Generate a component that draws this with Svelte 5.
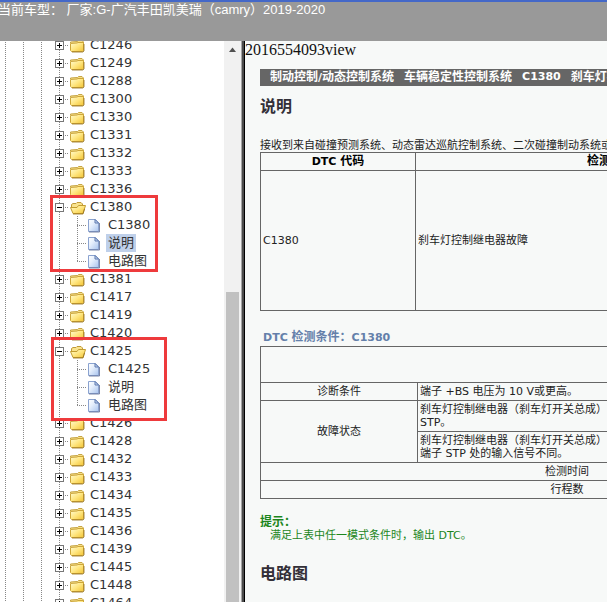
<script>
  const leaves = (code) => [code, '说明', '电路图'];
  let nodes = $state(
    [
      'C1246', 'C1249', 'C1288', 'C1300', 'C1330', 'C1331', 'C1332', 'C1333', 'C1336',
      'C1380', 'C1381', 'C1417', 'C1419', 'C1420', 'C1425', 'C1426', 'C1428', 'C1432',
      'C1433', 'C1434', 'C1435', 'C1436', 'C1439', 'C1445', 'C1448', 'C1464'
    ].map((code) => ({ code, open: code === 'C1380' || code === 'C1425' }))
  );
  let selected = $state('C1380-1');

  function pick(event, key) {
    event.preventDefault();
    selected = key;
  }
</script>

{#snippet guides()}
  <span class="guide"></span><span class="guide"></span><span class="guide"></span>
{/snippet}

<div class="page">
  <header>当前车型： 厂家:G-广汽丰田凯美瑞（camry）2019-2020</header>

  <div class="frames">
    <nav>
      <ul class="tree">
        {#each nodes as node (node.code)}
          <li>
            <div class="row">
              {@render guides()}
              <span class="guide branch">
                <button
                  class:open={node.open}
                  aria-label={node.open ? '-' : '+'}
                  onclick={() => (node.open = !node.open)}
                ></button>
              </span>
              <svg class="icon" viewBox="0 0 18 18" aria-hidden="true">
                <defs>
                  <linearGradient id="gold" x1="0" y1="0" x2="1" y2="1">
                    <stop offset="0" stop-color="#fffbd0" />
                    <stop offset="0.5" stop-color="#ffe680" />
                    <stop offset="1" stop-color="#f2c435" />
                  </linearGradient>
                  <linearGradient id="sheet" x1="0" y1="0" x2="1" y2="1">
                    <stop offset="0" stop-color="#ffffff" />
                    <stop offset="0.4" stop-color="#e6effc" />
                    <stop offset="1" stop-color="#a9c4ee" />
                  </linearGradient>
                </defs>
                {#if node.open}
                  <path d="M3.500 10V6.500L5 5.500H8L9 4.500H13L14.500 6V9.500" fill="#f9e38c" stroke="#c09a38" />
                  <path d="M2.500 9.500H9L10.500 7.500H17.500L15 15.500H5Z" fill="url(#gold)" stroke="#c39c30" />
                  <path d="M5 16H15L16.500 11" stroke="#94701a" stroke-width="0.8" fill="none" />
                {:else}
                  <path d="M2.500 7V6L9.500 5.500L10.500 4.500H14L15.500 6V8" fill="#f7e08a" stroke="#c6a545" />
                  <path d="M2.500 7.500L9 7L10 6.500H15.500V14.500L14.500 15.500H3.500L2.500 14.500Z" fill="url(#gold)" stroke="#cda63a" />
                  <path d="M4 16H15L16 15V8" stroke="#94701a" stroke-width="0.8" fill="none" />
                {/if}
              </svg>
              <a href="#{node.code}">{node.code}</a>
            </div>
            {#if node.open}
              <ul>
                {#each leaves(node.code) as leaf, i}
                  <li class="row">
                    {@render guides()}
                    <span class="guide"></span>
                    <span class="guide branch" class:last={i === 2}></span>
                    <svg class="icon" viewBox="0 0 18 18" aria-hidden="true">
                      <path d="M2.500 3.500H9.500L12.500 6.500V15.500H2.500Z" fill="url(#sheet)" stroke="#8ba3d0" />
                      <path d="M3 16H13.500V7" fill="none" stroke="#5a6a92" stroke-width="0.8" />
                      <path d="M9 3.500V7H12.500Z" fill="#cddcf6" stroke="#5d78ad" />
                    </svg>
                    <a
                      href="#{node.code}-{i}"
                      class:selected={selected === `${node.code}-${i}`}
                      onclick={(e) => pick(e, `${node.code}-${i}`)}>{leaf}</a
                    >
                  </li>
                {/each}
              </ul>
            {/if}
          </li>
        {/each}
      </ul>
      <div class="scroll">
        <svg viewBox="0 0 17 17" aria-hidden="true"><path d="M5 11L8.500 6.500L12 11Z" fill="#505050" /></svg>
        <div class="thumb"></div>
      </div>
    </nav>

    <main>
      <p class="view">2016554093view</p>
      <article>
        <div class="crumb">
          <span>制动控制<b>/</b>动态控制系统</span><span>车辆稳定性控制系统</span><b>C1380</b><span>刹车灯控制继电器故障</span>
        </div>
        <h2>说明</h2>
        <p class="intro">接收到来自碰撞预测系统、动态雷达巡航控制系统、二次碰撞制动系统或</p>
        <table class="codes">
          <thead>
            <tr><th class="code">DTC <span>代码</span></th><th><span>检测项目</span></th><th class="part"><span>故障部位</span></th></tr>
          </thead>
          <tbody>
            <tr><td>C1380</td><td>刹车灯控制继电器故障</td><td></td></tr>
          </tbody>
        </table>

        <h3>DTC <span>检测条件：</span>C1380</h3>
        <table class="conditions">
          <colgroup><col class="name" /><col /></colgroup>
          <tbody>
            <tr class="blank"><td colspan="2"></td></tr>
            <tr><td class="mid">诊断条件</td><td>端子 +BS 电压为 10 V或更高。</td></tr>
            <tr><td class="mid" rowspan="2">故障状态</td><td>刹车灯控制继电器（刹车灯开关总成）<br />STP。</td></tr>
            <tr><td>刹车灯控制继电器（刹车灯开关总成）<br />端子 STP 处的输入信号不同。</td></tr>
            <tr><td class="mid" colspan="2">检测时间</td></tr>
            <tr><td class="mid" colspan="2">行程数</td></tr>
          </tbody>
        </table>

        <div class="hint">
          <strong>提示：</strong>
          <p>满足上表中任一模式条件时，输出 DTC。</p>
        </div>
        <h2>电路图</h2>
      </article>
    </main>
  </div>

  <div class="mark first"></div>
  <div class="mark second"></div>
</div>

<style>
  :global(body) {
    margin: 0;
  }
  .page {
    position: relative;
    display: flex;
    flex-direction: column;
    height: 100vh;
    overflow: hidden;
    font-family: 'DejaVu Sans', 'Noto Sans CJK SC', sans-serif;
  }
  header {
    box-sizing: border-box;
    flex: none;
    height: 41px;
    border-top: 2px solid #4468c8;
    background: #999;
    color: #fff;
    font: 13px/15px 'Liberation Sans', 'Noto Sans CJK SC', sans-serif;
    text-indent: -2px;
    white-space: nowrap;
  }
  .frames {
    display: flex;
    flex: 1;
    min-height: 0;
  }
  nav {
    display: flex;
    flex: none;
    width: 241px;
    overflow: hidden;
    background: #fff;
  }
  ul {
    margin: 0;
    padding: 0;
    list-style: none;
  }
  .tree {
    flex: 1;
    margin: -5px 0 0 -4px;
  }
  .row {
    display: flex;
    align-items: center;
    height: 18px;
  }
  .guide {
    position: relative;
    flex: none;
    display: flex;
    align-items: center;
    justify-content: center;
    width: 18px;
    height: 18px;
    background: repeating-linear-gradient(#888 0 1px, transparent 1px 2px) 9px 0 / 1px 18px no-repeat;
  }
  .branch {
    background:
      repeating-linear-gradient(#888 0 1px, transparent 1px 2px) 9px 0 / 1px 18px no-repeat,
      repeating-linear-gradient(90deg, #888 0 1px, transparent 1px 2px) 9px 9px / 9px 1px no-repeat;
  }
  .branch.last {
    background-size: 1px 9px, 9px 1px;
  }
  button {
    box-sizing: border-box;
    width: 9px;
    height: 9px;
    margin-left: 1px;
    padding: 0;
    border: 1px solid #777;
    border-radius: 0;
    background:
      linear-gradient(#000, #000) center / 5px 1px no-repeat,
      linear-gradient(#000, #000) center / 1px 5px no-repeat,
      #fff;
  }
  button.open {
    background: linear-gradient(#000, #000) center / 5px 1px no-repeat, #fff;
  }
  .icon {
    flex: none;
    width: 18px;
    height: 18px;
  }
  .row a {
    margin-left: 2px;
    padding: 0 2px;
    color: #333;
    font-size: 13px;
    line-height: 18px;
    text-decoration: none;
  }
  .row a.selected {
    background: #bfd0ea;
  }
  .scroll {
    display: flex;
    flex-direction: column;
    flex: none;
    width: 17px;
    background: #f1f1f1;
  }
  .scroll svg {
    flex: none;
    height: 17px;
  }
  .thumb {
    flex: 1;
    margin: 234px 2px 0;
    background: #c1c1c1;
  }
  main {
    flex: 1;
    min-width: 0;
    overflow: hidden;
    border-left: 1px solid #000;
    box-shadow: -2px 0 #4a4a4a, -3px 0 #a5a5a5;
    margin-left: 3px;
    background: #f7f9f8;
    color: #222;
    font-size: 11px;
    line-height: 13px;
  }
  .view {
    margin: 0;
    color: #111;
    font: 16px/18px 'Liberation Serif', serif;
  }
  article {
    min-width: 614px;
    margin: 10px 0 0 15px;
  }
  .crumb {
    display: flex;
    gap: 10px;
    padding-left: 10px;
    background: #666;
    color: #fff;
    font-size: 12px;
    font-weight: bold;
    line-height: 16px;
    white-space: nowrap;
  }
  .crumb b {
    font-size: 11px;
  }
  h2 {
    margin: 12px 0 23px;
    color: #333038;
    font-size: 16px;
    line-height: 18px;
  }
  .intro {
    margin: 0;
    white-space: nowrap;
  }
  table {
    width: 100%;
    border-collapse: collapse;
    table-layout: fixed;
  }
  th,
  td {
    box-sizing: border-box;
    height: 18px;
    padding: 2px;
    border: 1px solid #666;
    text-align: left;
  }
  th {
    text-align: center;
    color: #000;
  }
  th span,
  h3 span {
    font-size: 12px;
  }
  .code {
    width: 155px;
  }
  .part {
    width: 67px;
  }
  .codes td {
    height: 140px;
  }
  h3 {
    margin: 20px 0 2px 3px;
    color: #6480aa;
    font-size: 11px;
    line-height: 13px;
  }
  .conditions .name {
    width: 157px;
  }
  .conditions .mid {
    text-align: center;
  }
  .conditions .blank td {
    height: 36px;
  }
  .hint {
    margin-top: 17px;
    color: #1c861c;
  }
  .hint strong {
    font-size: 12px;
  }
  .hint p {
    margin: 0 0 0 10px;
  }
  .hint + h2 {
    margin-top: 23px;
  }
  .mark {
    position: absolute;
    box-sizing: border-box;
    border: 3px solid #ee3a3c;
    pointer-events: none;
  }
  .first {
    left: 50px;
    top: 195px;
    width: 108px;
    height: 77px;
  }
  .second {
    left: 51px;
    top: 337px;
    width: 116px;
    height: 84px;
  }
</style>
